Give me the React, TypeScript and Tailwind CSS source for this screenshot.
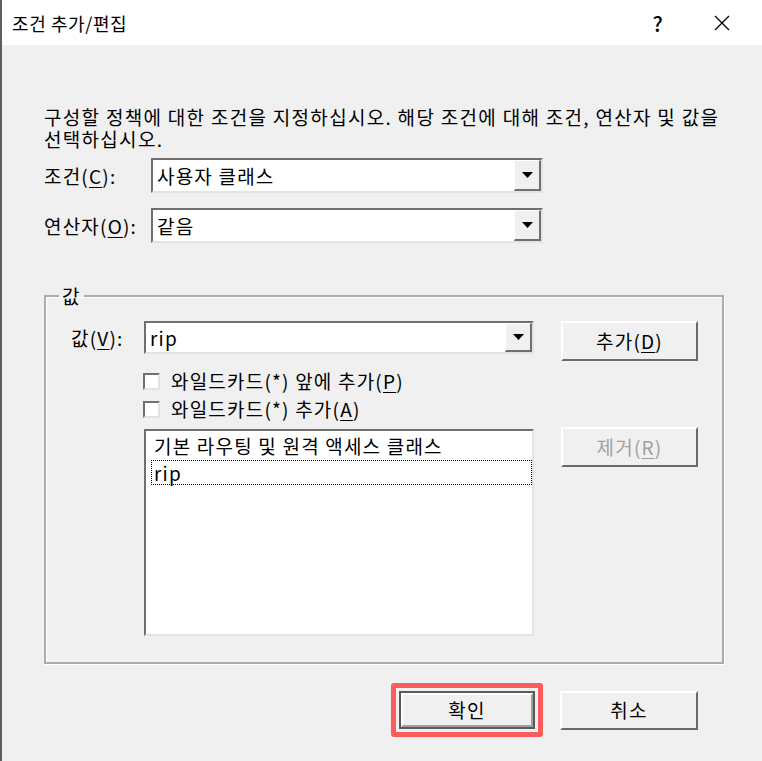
import { clsx } from "clsx"
import type { ReactNode } from "react"

const Mn = ({ children }: { children: ReactNode }) => (
  <span className="underline underline-offset-[3px] decoration-1">{children}</span>
)

const Arrow = () => (
  <svg width="11" height="6" viewBox="0 0 11 6">
    <path d="M0 0h11L5.5 6z" fill="#000" />
  </svg>
)

const Combo = ({ value, className }: { value: string; className?: string }) => (
  <div
    className={clsx(
      "flex bg-white border-2 border-t-[#6f6f6f] border-l-[#6f6f6f] border-r-[#e3e3e3] border-b-[#e3e3e3]",
      className
    )}
  >
    <div className="flex-1 flex items-center pl-[4px]">{value}</div>
    <div className="w-[27px] flex items-center justify-center bg-[#f0f0f0] border-t border-l border-t-white border-l-white border-r-2 border-b-2 border-r-[#6f6f6f] border-b-[#6f6f6f]">
      <Arrow />
    </div>
  </div>
)

type BtnProps = {
  children: ReactNode
  disabled?: boolean
  className?: string
}

const Btn = ({ children, disabled, className }: BtnProps) => (
  <button
    className={clsx(
      "flex items-center justify-center bg-[#f0f0f0] border-2 border-t-white border-l-white border-r-[#6a6a6a] border-b-[#6a6a6a]",
      disabled ? "text-[#a0a0a0]" : "text-black",
      className
    )}
  >
    {children}
  </button>
)

const Check = ({ children }: { children: ReactNode }) => (
  <label className="flex items-center h-[28px]">
    <span className="w-[17px] h-[17px] bg-white border-2 border-t-[#6f6f6f] border-l-[#6f6f6f] border-r-[#e3e3e3] border-b-[#e3e3e3]" />
    <span className="ml-[11px]">{children}</span>
  </label>
)

export default function App() {
  return (
    <div className="w-[762px] h-[761px] flex flex-col bg-[#f0f0f0] border-l-2 border-[#5e5e5e] text-[19px] leading-[22px] tracking-[1.2px] text-black font-['Noto_Sans_CJK_KR',sans-serif] overflow-hidden">
      {/* title bar */}
      <div className="h-[45px] shrink-0 bg-white flex items-center text-[18px] tracking-[0.6px]">
        <span className="ml-[10px]">조건 추가/편집</span>
        <span className="ml-auto w-[20px] text-center text-[21px] font-medium">?</span>
        <span className="ml-[44px] mr-[30px] w-[20px] flex justify-center">
          <svg width="16" height="16" viewBox="0 0 16 16">
            <path d="M1 1L15 15M15 1L1 15" stroke="#000" strokeWidth="1.3" />
          </svg>
        </span>
      </div>

      <div className="flex flex-col pl-[42px]">
        <p className="mt-[61px] w-[690px] tracking-[1.3px]">
          구성할 정책에 대한 조건을 지정하십시오. 해당 조건에 대해 조건, 연산자 및 값을 선택하십시오.
        </p>

        <div className="mt-[8px] flex items-center">
          <span className="w-[107px]">
            조건(<Mn>C</Mn>):
          </span>
          <Combo value="사용자 클래스" className="w-[392px] h-[35px]" />
        </div>
        <div className="mt-[15px] flex items-center">
          <span className="w-[107px]">
            연산자(<Mn>O</Mn>):
          </span>
          <Combo value="같음" className="w-[392px] h-[35px]" />
        </div>

        <fieldset className="mt-[42px] w-[680px] border-2 border-[#acacac] shadow-[1px_1px_0_#fff,inset_1px_1px_0_#fff] pl-[25px] pr-[23px] pb-[26px]">
          <legend className="-ml-[12px] px-[3px]">값</legend>
          <div className="flex mt-[14px]">
            <div className="flex flex-col">
              <div className="flex items-center">
                <span className="w-[73px]">
                  값(<Mn>V</Mn>):
                </span>
                <Combo value="rip" className="w-[390px] h-[33px]" />
              </div>
              <div className="mt-[13px] ml-[72px] flex flex-col">
                <Check>
                  와일드카드(*) 앞에 추가(<Mn>P</Mn>)
                </Check>
                <Check>
                  와일드카드(*) 추가(<Mn>A</Mn>)
                </Check>
              </div>
              <div className="mt-[6px] ml-[73px] w-[390px] h-[207px] bg-white border-2 border-t-[#6f6f6f] border-l-[#6f6f6f] border-r-[#e3e3e3] border-b-[#e3e3e3] flex flex-col">
                <div className="h-[29px] pl-[8px] flex items-center">기본 라우팅 및 원격 액세스 클래스</div>
                <div className="h-[25px] ml-[5px] pl-[2px] flex items-center border border-dotted border-black">rip</div>
              </div>
            </div>
            <div className="ml-[27px] flex flex-col">
              <Btn className="w-[137px] h-[40px]">
                추가(<Mn>D</Mn>)
              </Btn>
              <Btn disabled className="mt-[66px] w-[137px] h-[40px]">
                제거(<Mn>R</Mn>)
              </Btn>
            </div>
          </div>
        </fieldset>

        <div className="mt-[19px] flex items-center">
          <div className="ml-[347px] border-[5px] border-[#fd5c5c] rounded-[3px] px-[3px] py-[3px]">
            <div className="w-[136px] h-[38px] border-2 border-[#5a5a5a]">
              <Btn className="w-full h-full border-r-[#a0a0a0] border-b-[#a0a0a0]">확인</Btn>
            </div>
          </div>
          <Btn className="ml-[17px] w-[138px] h-[39px]">취소</Btn>
        </div>
      </div>
    </div>
  )
}
